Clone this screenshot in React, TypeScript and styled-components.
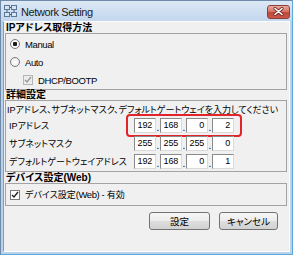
import { Fragment } from "react";
import styled, { createGlobalStyle } from "styled-components";

const Global = createGlobalStyle`
  html, body {
    margin: 0;
    padding: 0;
    background: #fff;
  }
  body {
    font-family: "Liberation Sans", "Noto Sans CJK JP", sans-serif;
    font-feature-settings: "palt";
    color: #000;
  }
`;

const Window = styled.div`
  width: 293px;
  height: 255px;
  box-sizing: border-box;
  display: flex;
  flex-direction: column;
  border: 1px solid #6f8aa8;
  border-bottom-color: #5aa9d6;
  border-right-color: #5aa9d6;
  padding: 0 2px 2px 2px;
  background: linear-gradient(#dce8f5 0px, #c3d7ee 20px, #b9d2ec 20px, #b9d2ec 100%);
`;

const TitleBar = styled.div`
  height: 20px;
  flex: none;
  display: flex;
  align-items: center;
  padding-left: 1px;
  gap: 4px;
  font-family: "Liberation Sans", sans-serif;
  font-size: 11px;
  letter-spacing: -0.4px;
  color: #1a1a1a;
`;

const Title = styled.div`
  flex: 1;
  padding-top: 1px;
`;

const CloseButton = styled.div`
  width: 23px;
  height: 14px;
  box-sizing: border-box;
  margin-top: 1px;
  border: 1px solid #8e3f37;
  border-radius: 3px;
  background: linear-gradient(#e8a89e 0%, #d5776a 45%, #c2483a 55%, #c9574a 100%);
  display: flex;
  align-items: center;
  justify-content: center;
`;

const Client = styled.div`
  flex: 1;
  display: flex;
  flex-direction: column;
  border: 1px solid;
  border-color: #fdfdfd #fdfdfd #fdfdfd #8d9aa9;
  background: #f0f0f0;
  padding: 0 2px 0 1px;
`;

const Header = styled.div<{ $h: number }>`
  height: ${(p) => p.$h}px;
  display: flex;
  align-items: center;
  padding-left: 1px;
  font-size: 10px;
  font-weight: bold;
  line-height: 1;
  white-space: nowrap;
`;

const Box = styled.div<{ $pt?: number; $pb?: number }>`
  border: 1px solid #a3a3a3;
  display: flex;
  flex-direction: column;
  padding: ${(p) => p.$pt ?? 1}px 0 ${(p) => p.$pb ?? 0}px 0;
`;

const OptionRow = styled.div<{ $h?: number; $indent?: number }>`
  height: ${(p) => p.$h ?? 18}px;
  display: flex;
  align-items: center;
  gap: 5px;
  padding-left: ${(p) => p.$indent ?? 4}px;
  font-size: 9px;
  white-space: nowrap;
`;

const Radio = styled.span<{ $on?: boolean }>`
  width: 10px;
  height: 10px;
  box-sizing: border-box;
  border-radius: 50%;
  border: 1px solid #7a7a7a;
  background: radial-gradient(circle, ${(p) => (p.$on ? "#1c1c1c 0 2px, #fdfdfd 2.5px" : "#ffffff 0")}, #e6e6e6 100%);
`;

const Check = styled.span<{ $disabled?: boolean }>`
  width: 10px;
  height: 10px;
  box-sizing: border-box;
  border: 1px solid ${(p) => (p.$disabled ? "#b5b5b5" : "#7a7a7a")};
  background: ${(p) => (p.$disabled ? "#ececec" : "#fff")};
  display: flex;
  align-items: center;
  justify-content: center;
`;

const Latin = styled.span`
  font-size: 9.5px;
  letter-spacing: -0.4px;
`;

const Instruction = styled.div`
  height: 14px;
  display: flex;
  align-items: center;
  padding-left: 1px;
  font-size: 9px;
  white-space: nowrap;
`;

const FieldRow = styled.div`
  height: 18px;
  display: flex;
  align-items: center;
  padding-left: 3px;
  font-size: 9px;
`;

const Label = styled.div`
  width: 125px;
  white-space: nowrap;
`;

const Address = styled.div<{ $mark?: boolean }>`
  position: relative;
  display: flex;
  align-items: flex-end;
  &::after {
    content: "";
    display: ${(p) => (p.$mark ? "block" : "none")};
    position: absolute;
    top: -4px;
    bottom: -4px;
    left: -8px;
    right: -8px;
    border: 2px solid #e2232a;
    border-radius: 4px;
  }
`;

const Octet = styled.div`
  width: 22px;
  height: 15px;
  box-sizing: border-box;
  border: 1px solid;
  border-color: #8a8a8a #dadada #dadada #8a8a8a;
  background: #fff;
  text-align: right;
  padding-right: 3px;
  font-size: 9px;
  line-height: 13px;
  letter-spacing: -0.2px;
`;

const Dot = styled.div`
  width: 4px;
  text-align: center;
  font-size: 10px;
  line-height: 10px;
`;

const Buttons = styled.div`
  display: flex;
  justify-content: flex-end;
  gap: 9px;
  padding: 6px 9px 0 0;
`;

const Button = styled.div<{ $w: number }>`
  width: ${(p) => p.$w}px;
  height: 18px;
  box-sizing: border-box;
  border: 1px solid #737373;
  border-radius: 3px;
  background: linear-gradient(#f6f6f6 0%, #ececec 50%, #dedede 51%, #d2d2d2 100%);
  display: flex;
  align-items: center;
  justify-content: center;
  font-size: 9.5px;
`;

const AppIcon = () => (
  <svg width="13" height="12" viewBox="0 0 13 12">
    <rect x="0.5" y="0.5" width="5" height="4" fill="#d7e4f3" stroke="#5b7796" />
    <rect x="7.5" y="0.5" width="5" height="4" fill="#d7e4f3" stroke="#5b7796" />
    <rect x="0.5" y="7.5" width="5" height="4" fill="#d7e4f3" stroke="#5b7796" />
    <rect x="7.5" y="7.5" width="5" height="4" fill="#d7e4f3" stroke="#5b7796" />
    <path d="M3 5v2M10 5v2M6 9.5h1.5M6 2.5h1.5" stroke="#3e5e86" />
  </svg>
);

const CloseGlyph = () => (
  <svg width="11" height="9" viewBox="0 0 11 9">
    <path d="M2 1.5l7 6M9 1.5l-7 6" stroke="#6b2620" strokeWidth="3" strokeLinecap="round" />
    <path d="M2 1.5l7 6M9 1.5l-7 6" stroke="#ffffff" strokeWidth="1.6" strokeLinecap="round" />
  </svg>
);

const Tick = ({ color }: { color: string }) => (
  <svg width="8" height="8" viewBox="0 0 8 8">
    <path d="M1 4l2 2 4-5" fill="none" stroke={color} strokeWidth="1.4" />
  </svg>
);

const rows = [
  { label: "IPアドレス", values: ["192", "168", "0", "2"], mark: true },
  { label: "サブネットマスク", values: ["255", "255", "255", "0"] },
  { label: "デフォルトゲートウェイアドレス", values: ["192", "168", "0", "1"] },
];

export default function App() {
  return (
    <>
      <Global />
      <Window>
        <TitleBar>
          <AppIcon />
          <Title>Network Setting</Title>
          <CloseButton>
            <CloseGlyph />
          </CloseButton>
        </TitleBar>
        <Client>
          <Header $h={11}>IPアドレス取得方法</Header>
          <Box>
            <OptionRow>
              <Radio $on />
              <Latin>Manual</Latin>
            </OptionRow>
            <OptionRow>
              <Radio />
              <Latin>Auto</Latin>
            </OptionRow>
            <OptionRow $indent={17}>
              <Check $disabled>
                <Tick color="#9a9a9a" />
              </Check>
              <Latin>DHCP/BOOTP</Latin>
            </OptionRow>
          </Box>
          <Header $h={10}>詳細設定</Header>
          <Box $pb={1}>
            <Instruction>IPアドレス、サブネットマスク、デフォルトゲートウェイを入力してください</Instruction>
            {rows.map((r) => (
              <FieldRow key={r.label}>
                <Label>{r.label}</Label>
                <Address $mark={r.mark}>
                  {r.values.map((v, i) => (
                    <Fragment key={i}>
                      {i > 0 && <Dot>.</Dot>}
                      <Octet>{v}</Octet>
                    </Fragment>
                  ))}
                </Address>
              </FieldRow>
            ))}
          </Box>
          <Header $h={11}>デバイス設定(Web)</Header>
          <Box $pt={0}>
            <OptionRow $h={21}>
              <Check>
                <Tick color="#222" />
              </Check>
              <span>
                デバイス設定<Latin>(Web) - </Latin>有効
              </span>
            </OptionRow>
          </Box>
          <Buttons>
            <Button $w={61}>設定</Button>
            <Button $w={59}>キャンセル</Button>
          </Buttons>
        </Client>
      </Window>
    </>
  );
}
